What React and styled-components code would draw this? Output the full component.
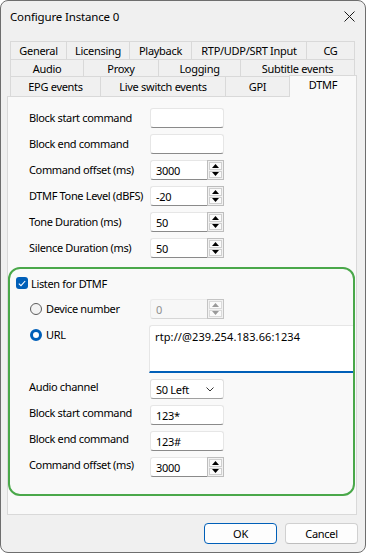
import React from 'react';
import styled, { createGlobalStyle } from 'styled-components';

const Global = createGlobalStyle`
  html, body { margin: 0; padding: 0; background: #ffffff; }
  body {
    width: 366px; height: 553px; overflow: hidden;
    font-family: "Noto Sans", "Open Sans", sans-serif;
    font-size: 11px; color: #000000;
  }
  * { box-sizing: border-box; }
`;

const Window = styled.div`
  width: 366px; height: 553px;
  border: 1px solid #6e6e6e; border-radius: 8px;
  background: #f0f0f0;
  display: flex; flex-direction: column;
  overflow: hidden;
`;

const TitleBar = styled.div`
  flex: none; height: 31px;
  display: flex; align-items: center; justify-content: space-between;
  padding: 0 10px 0 9px;
`;

const Title = styled.div`
  font-size: 11.5px; letter-spacing: -0.15px; color: #000;
`;

const CloseIcon = styled.svg`
  width: 11px; height: 11px; display: block;
`;

const Tabs = styled.div`
  flex: none;
  padding: 9px 0 0 9px;
  display: flex; flex-direction: column;
`;

const TabRow = styled.div`
  display: flex; align-items: flex-end;
  height: ${p => p.$h}px;
  margin-top: ${p => (p.$first ? 0 : -1)}px;
  position: relative;
  z-index: ${p => (p.$front ? 2 : 1)};
`;

const Tab = styled.div`
  flex: none;
  width: ${p => p.$w}px;
  height: ${p => (p.$selected ? p.$h + 1 : p.$h)}px;
  margin-left: ${p => (p.$first ? 0 : -1)}px;
  border: 1px solid #d9d9d9;
  border-bottom: ${p => (p.$selected ? 'none' : '1px solid #d9d9d9')};
  background: ${p => (p.$selected ? '#f9f9f9' : '#f0f0f0')};
  display: flex; align-items: ${p => (p.$selected ? 'flex-start' : 'center')}; justify-content: center;
  padding-top: ${p => (p.$selected ? 1 : 0)}px;
  letter-spacing: -0.3px;
  position: relative;
  z-index: ${p => (p.$selected ? 3 : 1)};
  white-space: nowrap;
`;

const Panel = styled.div`
  flex: none;
  margin: -1px 0 0 6px;
  width: 350px; height: 419px;
  border: 1px solid #d9d9d9;
  background: #f9f9f9;
  position: relative; z-index: 1;
`;

const TopForm = styled.div`
  padding: 11px 0 0 21px;
  display: grid;
  grid-template-columns: 121px 74px;
  grid-auto-rows: 20px;
  row-gap: 6px;
`;

const Label = styled.div`
  display: flex; align-items: ${p => (p.$top ? 'flex-start' : 'center')};
  line-height: 16px;
  padding-top: ${p => (p.$top ? 0 : 0)}px;
  letter-spacing: -0.35px;
  white-space: nowrap;
`;

const TextBox = styled.div`
  height: 20px;
  background: #ffffff;
  border: 1px solid #e6e6e6;
  border-bottom: 1px solid #8a8a8a;
  border-radius: 3px;
  padding-left: 5px;
  display: flex; align-items: center;
  letter-spacing: -0.3px;
`;

const SpinWrap = styled.div`
  height: 20px;
  display: flex;
`;

const SpinField = styled.div`
  flex: 1;
  background: ${p => (p.$disabled ? '#f7f7f7' : '#ffffff')};
  border: 1px solid ${p => (p.$disabled ? '#ebebeb' : '#e6e6e6')};
  border-bottom: 1px solid ${p => (p.$disabled ? '#d6d6d6' : '#8a8a8a')};
  border-right: none;
  border-radius: 3px 0 0 3px;
  padding-left: 5px;
  display: flex; align-items: center;
  color: ${p => (p.$disabled ? '#8f8f8f' : '#000')};
  letter-spacing: -0.3px;
`;

const SpinButtons = styled.div`
  flex: none; width: 17px;
  display: flex; flex-direction: column;
  border: 1px solid ${p => (p.$disabled ? '#c4c4c4' : '#bdbdbd')};
  background: #f2f2f2;
  padding: 1px;
  gap: 1px;
`;

const SpinBtn = styled.div`
  flex: 1;
  border: 1px solid ${p => (p.$disabled ? '#dadada' : '#cfcfcf')};
  background: #fbfbfb;
  display: flex; align-items: center; justify-content: center;
`;

const Arrow = styled.svg`
  width: 7px; height: 4px; display: block;
`;

const GroupBox = styled.div`
  margin: 9px 1px 0 0;
  height: 229px;
  border: 2px solid #4aa84a;
  border-radius: 12px;
  padding: 8px 0 0 6px;
  display: flex; flex-direction: column;
`;

const CheckRow = styled.label`
  display: flex; align-items: center; gap: 3px;
  height: 12px;
  letter-spacing: -0.35px;
  white-space: nowrap;
`;

const CheckBox = styled.span`
  width: 12px; height: 12px;
  border-radius: 3px;
  background: #005fb8;
  display: flex; align-items: center; justify-content: center;
`;

const SubGrid = styled.div`
  margin-top: 10px;
  padding-left: 13px;
  display: grid;
  grid-template-columns: 121px 1fr;
  grid-template-rows: 20px 48px 20px 20px 20px 20px;
  row-gap: 6px;
`;

const RadioLabel = styled.div`
  display: flex; align-items: ${p => (p.$top ? 'flex-start' : 'center')};
  padding-top: ${p => (p.$top ? 2 : 0)}px;
  padding-left: 1px;
  gap: 4px;
  letter-spacing: -0.35px;
  white-space: nowrap;
  line-height: 16px;
`;

const Radio = styled.span`
  flex: none;
  width: 12px; height: 12px; border-radius: 50%;
  margin-top: ${p => (p.$top ? 2 : 0)}px;
  border: ${p => (p.$checked ? '3.5px solid #005fb8' : '1px solid #5c5c5c')};
  background: ${p => (p.$checked ? '#ffffff' : '#f3f3f3')};
`;

const Controls = styled.div`
  width: 74px;
`;

const TextArea = styled.div`
  margin-left: -1px;
  height: 48px;
  background: #ffffff;
  border: 1px solid #e6e6e6;
  border-right: none;
  border-bottom: 2px solid #005fb8;
  border-radius: 3px 0 0 0;
  padding: 3px 0 0 5px;
  line-height: 16px;
  letter-spacing: 0.1px;
`;

const Select = styled.div`
  height: 20px;
  background: #ffffff;
  border: 1px solid #e0e0e0;
  border-bottom: 1px solid #a0a0a0;
  border-radius: 3px;
  padding: 0 9px 0 5px;
  display: flex; align-items: center; justify-content: space-between;
  letter-spacing: -0.3px;
`;

const Chevron = styled.svg`
  width: 8px; height: 5px; display: block;
`;

const GLabel = styled.div`
  line-height: 16px;
  letter-spacing: -0.35px;
  white-space: nowrap;
`;

const Footer = styled.div`
  flex: none;
  display: flex; justify-content: flex-end; gap: 8px;
  padding: 8px 7px 0 0;
`;

const Button = styled.button`
  width: 73px; height: 21px;
  border-radius: 4px;
  border: 1px solid ${p => (p.$primary ? '#005fb8' : '#d0d0d0')};
  border-bottom-color: ${p => (p.$primary ? '#005fb8' : '#bdbdbd')};
  background: #fdfdfd;
  font-family: inherit; font-size: 11px; color: #000;
  letter-spacing: -0.3px;
  padding: 0;
  display: flex; align-items: center; justify-content: center;
`;

const Spin = ({ value, disabled }) => (
  <SpinWrap>
    <SpinField $disabled={disabled}>{value}</SpinField>
    <SpinButtons $disabled={disabled}>
      <SpinBtn $disabled={disabled}>
        <Arrow viewBox="0 0 7 4"><path d="M3.5 0 L7 4 L0 4 Z" fill={disabled ? '#9a9a9a' : '#000'} /></Arrow>
      </SpinBtn>
      <SpinBtn $disabled={disabled}>
        <Arrow viewBox="0 0 7 4"><path d="M0 0 L7 0 L3.5 4 Z" fill={disabled ? '#9a9a9a' : '#000'} /></Arrow>
      </SpinBtn>
    </SpinButtons>
  </SpinWrap>
);

const tabRows = [
  { h: 19, tabs: [['General', 57], ['Licensing', 64], ['Playback', 63], ['RTP/UDP/SRT Input', 116], ['CG', 49]] },
  { h: 18, tabs: [['Audio', 74], ['Proxy', 76], ['Logging', 83], ['Subtitle events', 115]] },
  { h: 21, front: true, tabs: [['EPG events', 91], ['Live switch events', 126], ['GPI', 65], ['DTMF', 68, true]] },
];

export default function App() {
  return (
    <>
      <Global />
      <Window>
        <TitleBar>
          <Title>Configure Instance 0</Title>
          <CloseIcon viewBox="0 0 11 11">
            <path d="M0.5 0.5 L10.5 10.5 M10.5 0.5 L0.5 10.5" stroke="#1a1a1a" strokeWidth="1" fill="none" />
          </CloseIcon>
        </TitleBar>
        <Tabs>
          {tabRows.map((row, ri) => (
            <TabRow key={ri} $h={row.h} $first={ri === 0} $front={row.front}>
              {row.tabs.map(([name, w, sel], ti) => (
                <Tab key={name} $w={w} $h={row.h} $first={ti === 0} $selected={sel}>{name}</Tab>
              ))}
            </TabRow>
          ))}
        </Tabs>
        <Panel>
          <TopForm>
            <Label>Block start command</Label>
            <TextBox />
            <Label>Block end command</Label>
            <TextBox />
            <Label>Command offset (ms)</Label>
            <Spin value="3000" />
            <Label>DTMF Tone Level (dBFS)</Label>
            <Spin value="-20" />
            <Label>Tone Duration (ms)</Label>
            <Spin value="50" />
            <Label>Silence Duration (ms)</Label>
            <Spin value="50" />
          </TopForm>
          <GroupBox>
            <CheckRow>
              <CheckBox>
                <svg width="8" height="7" viewBox="0 0 8 7">
                  <path d="M0.8 3.6 L3 5.7 L7.2 1" stroke="#fff" strokeWidth="1.1" fill="none" />
                </svg>
              </CheckBox>
              Listen for DTMF
            </CheckRow>
            <SubGrid>
              <RadioLabel><Radio />Device number</RadioLabel>
              <Controls><Spin value="0" disabled /></Controls>
              <RadioLabel $top><Radio $checked $top />URL</RadioLabel>
              <TextArea>rtp://@239.254.183.66:1234</TextArea>
              <GLabel>Audio channel</GLabel>
              <Controls>
                <Select>
                  S0 Left
                  <Chevron viewBox="0 0 8 5"><path d="M0.5 0.5 L4 4 L7.5 0.5" stroke="#333" strokeWidth="1" fill="none" /></Chevron>
                </Select>
              </Controls>
              <GLabel>Block start command</GLabel>
              <Controls><TextBox>123*</TextBox></Controls>
              <GLabel>Block end command</GLabel>
              <Controls><TextBox>123#</TextBox></Controls>
              <GLabel>Command offset (ms)</GLabel>
              <Controls><Spin value="3000" /></Controls>
            </SubGrid>
          </GroupBox>
        </Panel>
        <Footer>
          <Button $primary>OK</Button>
          <Button>Cancel</Button>
        </Footer>
      </Window>
    </>
  );
}
